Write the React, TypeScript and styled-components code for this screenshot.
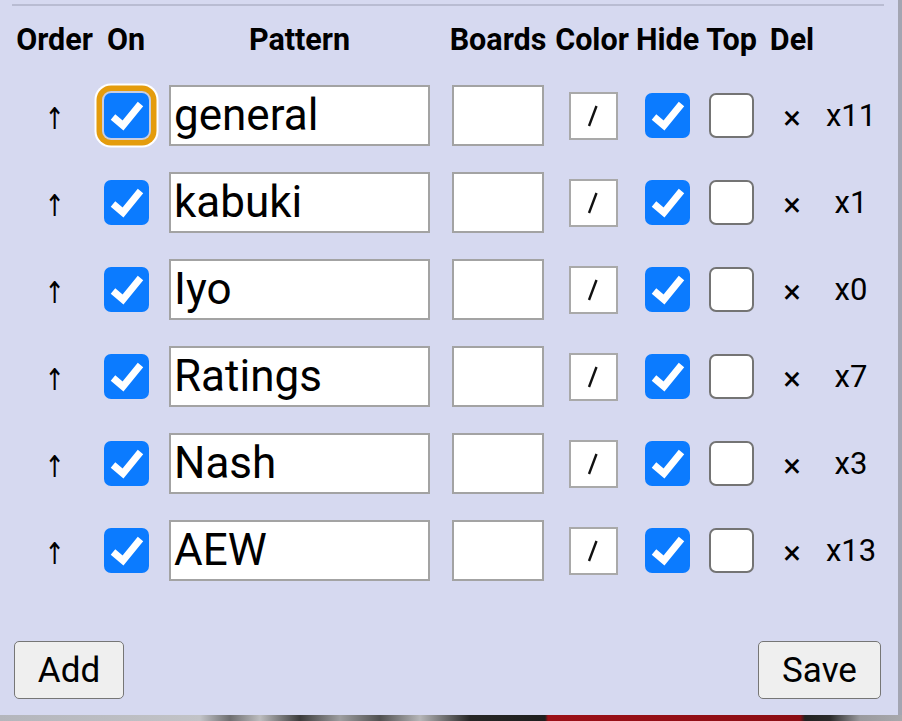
import React from "react";
import styled, { createGlobalStyle } from "styled-components";

const Global = createGlobalStyle`
  html, body { margin: 0; padding: 0; }
  body {
    width: 902px; height: 721px; overflow: hidden;
    background: #a3a5b2;
    font-family: Roboto, "Noto Sans", sans-serif;
    color: #000;
  }
`;

const Page = styled.div`
  width: 902px;
  height: 721px;
  display: flex;
  flex-direction: column;
`;

const Panel = styled.div`
  width: 898px;
  height: 715px;
  background: #d6d9f0;
  box-sizing: border-box;
  padding: 4px 0 0 12px;
  display: flex;
  flex-direction: column;
`;

const Rule = styled.div`
  width: 872px;
  border-top: 2px solid #b9bcd2;
`;

const Strip = styled.div`
  height: 6px;
  width: 902px;
  background: linear-gradient(
    90deg,
    #b4b6bc 0px, #c2c3c7 200px, #6e6e70 230px, #bdbdbf 260px,
    #3b3b3b 300px, #9e9ea0 340px, #505050 380px, #b6b6b8 420px,
    #262626 470px, #1e1e1e 545px, #9b1018 548px, #8c0d14 800px,
    #222 805px, #2b2b2b 830px, #9a9a9e 860px, #a9a9ad 902px
  );
`;

const Grid = styled.div`
  display: grid;
  grid-template-columns: 85px 58px 289px 108px 80px 71px 57px 64px 54px;
  align-items: center;
  justify-items: center;
`;

const HeadRow = styled(Grid)`
  height: 66px;
  padding-top: 1px;
  box-sizing: border-box;
`;

const Row = styled(Grid)`
  height: 87px;
`;

const Head = styled.div`
  font-weight: 700;
  font-size: 30.5px;
  white-space: nowrap;
`;

const Arrow = styled.div`
  font-size: 30px;
  font-family: "DejaVu Sans", sans-serif;
  transform: scaleX(0.8);
  padding-top: 6px;
`;

const Box = styled.div<{ $checked: boolean; $focus?: boolean }>`
  width: 45px;
  height: 45px;
  box-sizing: border-box;
  border-radius: 7px;
  background: ${(p) => (p.$checked ? "#0b7bff" : "#ffffff")};
  border: ${(p) => (p.$checked ? "none" : "2.5px solid #747474")};
  display: flex;
  align-items: center;
  justify-content: center;
  box-shadow: ${(p) =>
    p.$focus
      ? "0 0 0 2px #c9cde0, 0 0 0 7.5px #e49c0d, 0 0 0 9.5px #ffffff"
      : "none"};
`;

const TextInput = styled.div<{ $w: number }>`
  width: ${(p) => p.$w}px;
  height: 61px;
  box-sizing: border-box;
  background: #fff;
  border: 2px solid #a3a3a3;
  font-size: 44px;
  line-height: 57px;
  padding-left: 3px;
  white-space: nowrap;
  overflow: hidden;
`;

const ColorBtn = styled.div`
  width: 49px;
  height: 48px;
  box-sizing: border-box;
  background: #fff;
  border: 2px solid #a9a9a9;
  display: flex;
  align-items: center;
  justify-content: center;
  margin-left: 2px;
`;

const Cross = styled.div`
  font-size: 33px;
  padding-top: 4px;
`;

const Count = styled.div`
  font-size: 31px;
  white-space: nowrap;
`;

const Spacer = styled.div`
  flex: 1;
`;

const Footer = styled.div`
  display: flex;
  justify-content: space-between;
  width: 867px;
  padding-left: 2px;
  margin-bottom: 16px;
`;

const Button = styled.div<{ $w: number }>`
  width: ${(p) => p.$w}px;
  height: 58px;
  box-sizing: border-box;
  background: #efefef;
  border: 1.5px solid #767676;
  border-radius: 5px;
  font-size: 35px;
  display: flex;
  align-items: center;
  justify-content: center;
`;

const Check = () => (
  <svg width="45" height="45" viewBox="0 0 45 45">
    <path
      d="M9 24 L19 32.5 L36.5 11"
      fill="none"
      stroke="#fff"
      strokeWidth="7"
      strokeLinejoin="miter"
      strokeLinecap="butt"
    />
  </svg>
);

const Slash = () => (
  <svg width="22" height="28" viewBox="0 0 22 28">
    <line x1="7" y1="24" x2="14.5" y2="4" stroke="#111" strokeWidth="2.4" />
  </svg>
);

const Checkbox = ({ checked, focus }: { checked: boolean; focus?: boolean }) => (
  <Box $checked={checked} $focus={focus}>
    {checked && <Check />}
  </Box>
);

const rows = [
  { name: "general", count: "x11" },
  { name: "kabuki", count: "x1" },
  { name: "Iyo", count: "x0" },
  { name: "Ratings", count: "x7" },
  { name: "Nash", count: "x3" },
  { name: "AEW", count: "x13" },
];

export default function App() {
  return (
    <Page>
      <Global />
      <Panel>
        <Rule />
        <HeadRow>
          <Head>Order</Head>
          <Head>On</Head>
          <Head>Pattern</Head>
          <Head>Boards</Head>
          <Head>Color</Head>
          <Head>Hide</Head>
          <Head>Top</Head>
          <Head>Del</Head>
          <div />
        </HeadRow>
        {rows.map((r, i) => (
          <Row key={r.name}>
            <Arrow>↑</Arrow>
            <Checkbox checked focus={i === 0} />
            <TextInput $w={261}>{r.name}</TextInput>
            <TextInput $w={92} />
            <ColorBtn>
              <Slash />
            </ColorBtn>
            <Checkbox checked />
            <Checkbox checked={false} />
            <Cross>×</Cross>
            <Count>{r.count}</Count>
          </Row>
        ))}
        <Spacer />
        <Footer>
          <Button $w={110}>Add</Button>
          <Button $w={123}>Save</Button>
        </Footer>
      </Panel>
      <Strip />
    </Page>
  );
}
